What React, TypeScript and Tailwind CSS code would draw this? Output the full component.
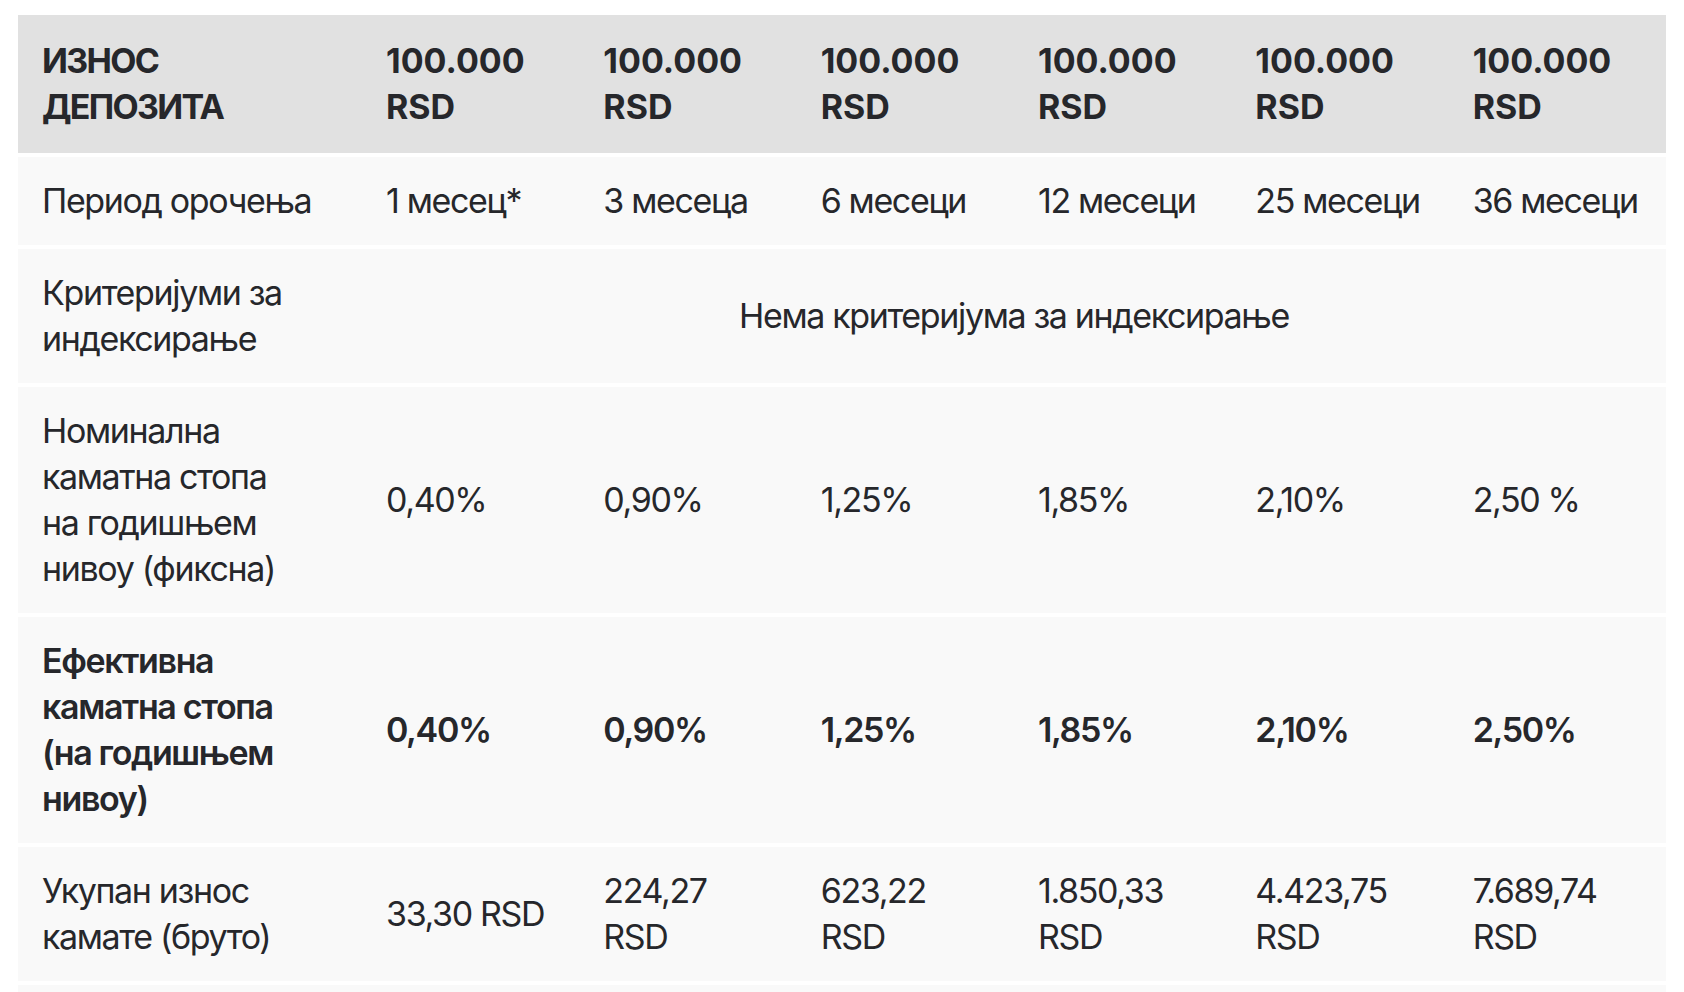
const cols = ['1 месец*', '3 месеца', '6 месеци', '12 месеци', '25 месеци', '36 месеци']
const nominal = ['0,40%', '0,90%', '1,25%', '1,85%', '2,10%', '2,50 %']
const effective = ['0,40%', '0,90%', '1,25%', '1,85%', '2,10%', '2,50%']
const gross = ['33,30 RSD', '224,27 RSD', '623,22 RSD', '1.850,33 RSD', '4.423,75 RSD', '7.689,74 RSD']
const net = ['28,31 RSD', '190,63 RSD', '529,74 RSD', '1.572,78 RSD', '3.760,19 RSD', '6.536,28 RSD']

// shared cell spacing; the white bottom border makes the gap between rows
const td = 'pl-6 pr-6 py-[21px] align-middle border-b-4 border-white'
const first = 'pl-6 pr-[50px] py-[21px] align-middle border-b-4 border-white'

export default function App() {
  return (
    <div
      className="min-h-screen bg-white px-[18px] pt-[15px] text-[#26272b]"
      style={{ fontFamily: 'Inter, "Noto Sans", sans-serif' }}
    >
      <table className="w-full table-fixed border-collapse text-[34px] leading-[46px]">
        <colgroup>
          <col className="w-[344px]" />
          <col />
          <col />
          <col />
          <col />
          <col />
          <col />
        </colgroup>
        <thead>
          <tr className="bg-[#e1e1e1] text-left font-bold">
            <th className={`${first} pt-[23px] pb-[23px] tracking-[-0.05em]`}>ИЗНОС ДЕПОЗИТА</th>
            {cols.map((_, i) => (
              <th key={i} className={`${td} pt-[23px] pb-[23px]`}>
                100.000 RSD
              </th>
            ))}
          </tr>
        </thead>
        <tbody className="bg-[#f9f9f9] tracking-[-0.04em]">
          <tr>
            <td className={first}>Период орочења</td>
            {cols.map((c) => (
              <td key={c} className={td}>
                {c}
              </td>
            ))}
          </tr>
          <tr>
            <td className={first}>Критеријуми за индексирање</td>
            <td colSpan={6} className={`${td} text-center`}>
              Нема критеријума за индексирање
            </td>
          </tr>
          <tr>
            <td className={first}>
              Номинална каматна стопа
              <br />
              на годишњем нивоу (фиксна)
            </td>
            {nominal.map((v, i) => (
              <td key={i} className={td}>
                {v}
              </td>
            ))}
          </tr>
          <tr className="font-semibold">
            <td className={first}>Ефективна каматна стопа (на годишњем нивоу)</td>
            {effective.map((v, i) => (
              <td key={i} className={td}>
                {v}
              </td>
            ))}
          </tr>
          <tr>
            <td className={first}>Укупан износ камате (бруто)</td>
            {gross.map((v, i) => (
              <td key={i} className={td}>
                {v}
              </td>
            ))}
          </tr>
          <tr>
            <td className={first}>Укупан износ камате (нето)</td>
            {net.map((v, i) => (
              <td key={i} className={td}>
                {v}
              </td>
            ))}
          </tr>
        </tbody>
      </table>
    </div>
  )
}
